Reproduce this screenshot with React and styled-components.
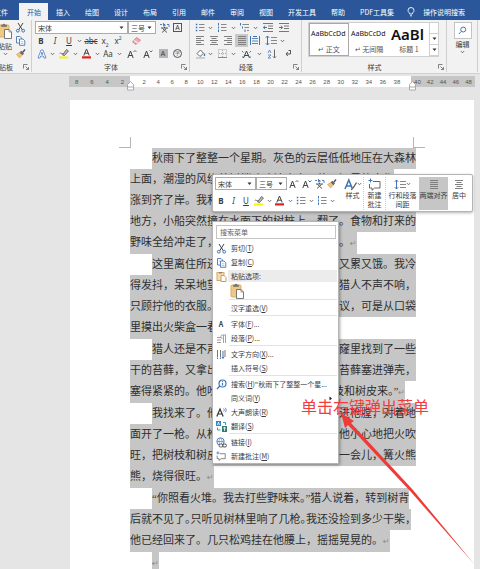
import React from 'react'
import styled, { createGlobalStyle, ThemeProvider } from 'styled-components'

const theme = {
  blue: '#2b579a',
  ribbon: '#f3f2f2',
  line: '#d0d0d0',
  ink: '#3b3b3b',
  accent: '#3f74b5',
  desk: '#e5e5e5',
  selection: '#c6c6c6',
  red: '#f23c3c'
}

const GlobalStyle = createGlobalStyle`
  * {
    box-sizing: border-box;
  }
  body {
    margin: 0;
    font-family: "Noto Sans CJK SC", sans-serif;
    font-size: 7px;
    color: #3b3b3b;
  }
  button, input, select {
    margin: 0;
    padding: 0;
    border: 0;
    background: none;
    font: inherit;
    color: inherit;
  }
`

/* ---------- icons ---------- */

const Svg = styled.svg`
  display: block;
  flex: none;
  fill: none;
  stroke: ${({ theme }) => theme.ink};
  stroke-width: 1;
`

const Icon = ({ w = 11, h = 11, children }) => (
  <Svg width={w} height={h} viewBox={`0 0 ${w} ${h}`} aria-hidden="true">
    {children}
  </Svg>
)

const Chevron = () => (
  <Icon w={5} h={4}>
    <path d="M.8 1l1.700 1.800L4.200 1" stroke="#666" strokeWidth=".9" />
  </Icon>
)

const Triangle = () => (
  <Icon w={5} h={4}>
    <path d="M.5.5h4L2.500 3z" fill="#333" stroke="none" />
  </Icon>
)

const Scissors = () => (
  <Icon>
    <path d="M3 1l4.500 7M8 1L3.500 8" stroke="#444" />
    <circle cx="2.800" cy="8.700" r="1.400" stroke="#3f74b5" />
    <circle cx="8.200" cy="8.700" r="1.400" stroke="#3f74b5" />
  </Icon>
)

const Copy = () => (
  <Icon>
    <path d="M1.500 1.500h3.500l1.500 1.500v5h-5z" fill="#fff" stroke="#5b83b8" />
    <path d="M4.500 4h3.500l1.800 1.800v4.500H4.500z" fill="#fff" stroke="#5b83b8" />
    <path d="M5.800 6.800h2.600M5.800 8.500h2.600M2.700 4h1.500" stroke="#8fabd0" strokeWidth=".7" />
  </Icon>
)

const Painter = () => (
  <Icon>
    <path d="M1.500 6.500l3-2 2.500 2.800-2.400 2.600z" fill="#f0c27a" stroke="#d9a24c" strokeWidth=".7" />
    <path d="M4.600 4.200l2.800 3L9 5.600 6.400 2.800z" fill="#666" stroke="none" />
    <path d="M7.800 4.200L10 1.600" stroke="#555" strokeWidth="1.500" />
  </Icon>
)

const Paste = () => (
  <Icon w={15} h={17}>
    <rect x="1" y="2" width="10" height="12" rx="1" fill="#efc983" stroke="#dfae5b" />
    <path d="M3.500 3.500v-1.500h1.500c0-1.300 2-1.300 2 0h1.500v1.500z" fill="#777" stroke="#666" strokeWidth=".5" />
    <path d="M6.500 6.500h4.500l2.500 2.500v6.500h-7z" fill="#fff" stroke="#777" />
    <path d="M11 6.500v2.500h2.500" stroke="#777" strokeWidth=".7" />
  </Icon>
)

const PasteSmall = () => (
  <Icon>
    <rect x="1" y="1.500" width="7" height="8" fill="#f6dcae" stroke="#d8a867" />
    <path d="M3 1h3v1.500H3z" fill="#888" stroke="none" />
    <path d="M5 4.500h3l2 2v4H5z" fill="#fff" stroke="#c79a68" />
  </Icon>
)

const Lines = ({ type = 'justify' }) => {
  const d = {
    left: 'M1 .5h8M1 2.500h5M1 4.500h8M1 6.500h5M1 8.500h8',
    center: 'M1 .5h8M2.500 2.500h5M1 4.500h8M2.500 6.500h5M1 8.500h8',
    right: 'M1 .5h8M4 2.500h5M1 4.500h8M4 6.500h5M1 8.500h8',
    justify: 'M1 .5h8M1 2.500h8M1 4.500h8M1 6.500h8M1 8.500h8'
  }[type]
  return (
    <Icon w={10} h={9}>
      <path d={d} stroke="#808080" />
    </Icon>
  )
}

const Bullets = () => (
  <Icon w={10} h={9}>
    <path d="M.8 1.500h1.500M.8 4.500h1.500M.8 7.500h1.500" stroke="#3f74b5" strokeWidth="1.400" />
    <path d="M4 1.500h5.500M4 4.500h5.500M4 7.500h5.500" stroke="#888" />
  </Icon>
)

const Numbering = () => (
  <Icon w={10} h={9}>
    <path d="M1.500 0v2.500M1.500 3.500v2M1.500 6.500V9" stroke="#3f74b5" />
    <path d="M4 1.500h5.500M4 4.500h5.500M4 7.500h5.500" stroke="#888" />
  </Icon>
)

const Multilevel = () => (
  <Icon w={11} h={9}>
    <path d="M1.500 0v2.500M3.500 3.500v2M6 6.500V9" stroke="#3f74b5" />
    <path d="M3.500 1.500H10M5.500 4.500H10M8 7.500h2" stroke="#888" />
  </Icon>
)

const Indent = ({ out }) => (
  <Icon w={10} h={9}>
    <path d="M0 .5h10M5 3h5M5 5.500h5M0 8.500h10" stroke="#777" />
    <path d={out ? 'M4 4.500H.5M2 2.700L.5 4.500 2 6.200' : 'M0 4.500h3.500M2 2.700l1.500 1.800L2 6.200'} stroke="#3f74b5" />
  </Icon>
)

const Distribute = () => (
  <Icon w={10} h={9}>
    <path d="M.5 0v9M9.500 0v9" stroke="#3f74b5" />
    <path d="M2 2.500h6M2 5h6M2 7.500h6" stroke="#5f86bb" />
    <path d="M3 .5h4" stroke="#3f74b5" />
  </Icon>
)

const Spacing = () => (
  <Icon w={12} h={11}>
    <path d="M2.500 1v9M.8 2.800L2.500 1l1.700 1.800M.8 8.200L2.500 10l1.700-1.800" stroke="#3f74b5" />
    <path d="M6 2.500h6M6 5.500h6M6 8.500h6" stroke="#888" />
  </Icon>
)

const Bucket = () => (
  <Icon w={11} h={10}>
    <path d="M2 4.500L5.500 1l3 3.300L5 7.500z" fill="#fff" stroke="#666" />
    <path d="M9.500 4.500v2.500" stroke="#3f74b5" strokeWidth="1.300" />
    <path d="M1 9h9" stroke="#aaa" />
  </Icon>
)

const Borders = () => (
  <Icon w={9} h={9}>
    <path d="M.5.5h8v8h-8zM4.500 1v7M1 4.500h7" stroke="#aaa" strokeDasharray="1 1" />
    <path d="M0 8.500h9" stroke="#888" />
  </Icon>
)

const AsianLayout = () => (
  <Icon w={11} h={10}>
    <path d="M1 2l1.500 1.500M10 2L8.500 3.500M1 8h1.500M10 8H8.500" stroke="#3f74b5" />
    <path d="M2.500 9l3-7 3 7M3.800 6.500h3.500" stroke="#444" />
  </Icon>
)

const Sort = () => (
  <Icon w={10} h={10}>
    <path d="M1 4l1.500-3L4 4M1 6h3L1 9h3" stroke="#4a78b4" strokeWidth=".8" />
    <path d="M7.500.5v8.500M6 7.500L7.500 9 9 7.500" stroke="#666" />
  </Icon>
)

const Mark = () => (
  <Icon w={8} h={9}>
    <path d="M6.500 1v4H2M3.800 3L2 5l1.800 2M4.500 1.500H7" stroke="#555" />
  </Icon>
)

const Highlighter = () => (
  <Icon w={12} h={11}>
    <path d="M1 8.500h9v2H1z" fill="#f7f10d" stroke="none" />
    <path d="M2 5.500c1-2 2 2 3-.5M4.500 7l4-5.500L10.500 3 6.500 7.500z" fill="#bbb" stroke="#555" strokeWidth=".8" />
  </Icon>
)

const FontColor = () => (
  <Icon w={11} h={11}>
    <path d="M2.800 7.500L5.500 1l2.700 6.500M3.700 5.200h3.600" stroke="#444" />
    <path d="M1 8.300h9v2.200H1z" fill="#e2211c" stroke="none" />
  </Icon>
)

const OutlineA = () => (
  <Icon w={10} h={10}>
    <path d="M1 9L4 1h2l3 8H7L6.300 7H3.700L3 9zM4.200 5.300h1.600L5 3z" fill="#fff" stroke="#5b8ac6" strokeWidth=".9" />
  </Icon>
)

const Eraser = () => (
  <Icon w={11} h={10}>
    <path d="M1.500 6l4-4.500L9.500 4 5 8.500z" fill="#f3a9b4" stroke="#c9788a" strokeWidth=".8" />
    <path d="M3 4.500l4 2.500" stroke="#fff" />
  </Icon>
)

const Phonetic = () => (
  <Icon w={11} h={11}>
    <path d="M1 2.500h2M4.500 1v3h1.500V2.500H4.500M8 2.500h2v2.500" stroke="#3f74b5" strokeWidth=".9" />
    <path d="M2 6h7M5.500 5v1M3.500 6.500L8 10.500M7.500 6.500L3 10.500" stroke="#444" strokeWidth=".9" />
  </Icon>
)

const GrowFont = ({ shrink }) => (
  <Icon w={10} h={10}>
    <path d="M.8 9L3.500 2l2.700 7M1.800 6.500h3.500" stroke="#444" />
    <path d={shrink ? 'M6.500 1.500L8 3l1.500-1.500' : 'M6.500 3L8 1.500 9.500 3'} stroke="#3f74b5" />
  </Icon>
)

const Launcher = () => (
  <Icon w={6} h={6}>
    <path d="M.5 4.500v-4h4M2.500 2.500l3 3M5.500 3v2.500H3" stroke="#666" strokeWidth=".8" />
  </Icon>
)

const Search = () => (
  <Icon w={9} h={9}>
    <circle cx="5.200" cy="3.500" r="2.500" stroke="#3f74b5" />
    <path d="M3.300 5.400L.8 8" stroke="#3f74b5" />
  </Icon>
)

const Bulb = () => (
  <Icon w={8} h={10}>
    <path d="M2.700 7C2.700 5.500 1 5 1 3.500a3 3 0 016 0C7 5 5.300 5.500 5.300 7zM3 8.800h2" stroke="#fff" strokeWidth=".9" />
  </Icon>
)

const StyleA = () => (
  <Icon w={13} h={13}>
    <path d="M1 11L4.800 2 8.500 11M2.300 8h5" stroke="#3f74b5" strokeWidth="1.500" />
    <path d="M7 11.500c2 0 2-2 3-3l2.500-4" stroke="#666" strokeWidth="1.300" />
  </Icon>
)

const Comment = ({ w = 13 }) => (
  <Svg width={w} height={w} viewBox="0 0 13 13" aria-hidden="true">
    <path d="M5 3.500h7v6.500H6.500L4 12.300V10H1.500V6" stroke="#666" />
    <path d="M2.500.5v4M.5 2.500h4" stroke="#3f74b5" />
  </Svg>
)

const ParagraphIcon = () => (
  <Icon>
    <path d="M1 4.500h4M1 7h4M1 9.500h4" stroke="#999" />
    <path d="M9.500 10V2M7.500 10V2M10 2H6.500a1.700 1.700 0 000 3.500" stroke="#999" strokeWidth=".9" />
  </Icon>
)

const Direction = () => (
  <Icon>
    <path d="M1.500 1v7M4.500 1v7M9 1v7" stroke="#777" />
    <path d="M1.500 10v-1.500M4.500 10V8.500M7 2v7M6 8l1 1.500L8 8" stroke="#3f74b5" />
  </Icon>
)

const SmartSearch = () => (
  <Icon>
    <circle cx="6.500" cy="4.500" r="3.500" stroke="#3f74b5" strokeWidth="1.200" />
    <path d="M3.800 7L1 10M6.500 4v2.500M6.500 2.200v1" stroke="#3f74b5" strokeWidth="1.200" />
  </Icon>
)

const ReadAloud = () => (
  <Icon>
    <path d="M.8 9.500L4 2l3.200 7.500M2 7h4" stroke="#333" strokeWidth="1.200" />
    <path d="M7.500 1.500c1 1 1 2 0 3M9.200.8c1.300 1.500 1.300 3 0 4.500" stroke="#3f74b5" strokeWidth=".8" />
  </Icon>
)

const Translate = () => (
  <Icon>
    <path d="M0 0h5v5H0z" fill="#2f86c9" stroke="none" />
    <path d="M6 5h5v6H6z" fill="#2f7d6b" stroke="none" />
    <path d="M1.500 4l1-3 1 3M7 7h3M8.500 6v4" stroke="#fff" strokeWidth=".8" />
    <path d="M7 1.500h2.500V4M1.500 6.500V9H4.500" stroke="#2f9ad0" />
  </Icon>
)

const LinkIcon = () => (
  <Icon>
    <circle cx="4.500" cy="4.500" r="3.700" stroke="#5b83b8" />
    <path d="M1 4.500h7M4.500 1c-2 2-2 5 0 7M4.500 1c2 2 2 5 0 7" stroke="#5b83b8" strokeWidth=".7" />
    <rect x="3" y="7" width="4" height="3" rx="1.500" fill="#fff" stroke="#555" />
    <rect x="6.500" y="7" width="4" height="3" rx="1.500" stroke="#555" />
  </Icon>
)

/* ---------- ribbon ---------- */

const Window = styled.div`
  position: relative;
  display: flex;
  flex-direction: column;
  height: 100vh;
  overflow: hidden;
  background: ${({ theme }) => theme.desk};
`

const Tabs = styled.nav`
  display: flex;
  align-items: flex-end;
  flex: none;
  height: 20px;
  padding-right: 8px;
  background: ${({ theme }) => theme.blue};
  color: #fff;
`

const Tab = styled.button`
  flex: none;
  height: 17px;
  padding: 0 7px 0 8px;
  line-height: 16px;
  white-space: nowrap;
  background: ${({ $active }) => ($active ? '#f3f2f2' : 'transparent')};
  color: ${({ $active, theme }) => ($active ? theme.blue : '#fff')};

  &:first-child {
    margin-left: -14px;
    padding-right: 11px;
  }
`

const TellMe = styled.button`
  display: flex;
  align-items: center;
  gap: 8px;
  height: 17px;
  margin-left: 6px;
  white-space: nowrap;
  color: #fff;
`

const Ribbon = styled.div`
  display: flex;
  height: 54px;
  flex: none;
  background: ${({ theme }) => theme.ribbon};
  border-bottom: 1px solid ${({ theme }) => theme.line};
`

const Group = styled.section`
  display: flex;
  flex-direction: column;
  flex: none;
  width: ${({ $width }) => $width}px;
  padding: 1px 2px 0 3px;
  margin-bottom: 1px;
  overflow: hidden;
  border-right: 1px solid ${({ theme }) => theme.line};
`

const GroupBody = styled.div`
  display: flex;
  flex-direction: ${({ $row }) => ($row ? 'row' : 'column')};
  flex: none;
  height: 40px;
`

const GroupFooter = styled.div`
  display: grid;
  grid-template-columns: 6px 1fr 6px;
  align-items: center;
  height: 12px;
  line-height: 12px;
  text-align: center;
  white-space: nowrap;
`

const Row = styled.div`
  display: flex;
  align-items: center;
  height: 13px;
`

const Tool = styled.button`
  display: flex;
  flex: none;
  align-items: center;
  justify-content: center;
  width: ${({ $w }) => $w}px;
  height: 13px;
  font: 8px/13px "Noto Sans", sans-serif;
  font-weight: ${({ $bold }) => ($bold ? 700 : 400)};
  font-style: ${({ $italic }) => ($italic ? 'italic' : 'normal')};
  text-decoration: ${({ $deco }) => $deco || 'none'};
  background: ${({ $on }) => ($on ? '#c9c9c9' : 'none')};

  sub, sup {
    font-size: 5px;
    line-height: 5px;
  }
`

const Boxed = styled.span`
  width: 9px;
  height: 9px;
  border: 1px solid ${({ $plain }) => ($plain ? '#b5b5b5' : '#555')};
  border-radius: ${({ $round }) => ($round ? 5 : 0)}px;
  background: ${({ $plain }) => ($plain ? '#b5b5b5' : 'none')};
  font-size: ${({ $round }) => ($round ? 5 : 7)}px;
  line-height: 7px;
  text-align: center;
`

const SelectBox = styled.label`
  display: grid;
  grid-template-columns: 1fr 8px;
  align-items: center;
  flex: none;
  width: ${({ $w }) => $w}px;
  height: 13px;
  border: 1px solid #ababab;
  background: #fff;

  select {
    grid-area: 1 / 1 / 2 / 3;
    width: 100%;
    height: 11px;
    padding-left: 2px;
    appearance: none;
    outline: 0;
  }
  svg {
    grid-area: 1 / 2;
  }
`

const Select = ({ w, label, value }) => (
  <SelectBox $w={w}>
    <select aria-label={label} defaultValue={value}>
      <option>{value}</option>
    </select>
    <Triangle />
  </SelectBox>
)

const PasteColumn = styled.button`
  display: flex;
  flex-direction: column;
  align-items: center;
  width: 20px;
  margin-left: -8px;
  padding-top: 2px;
  line-height: 12px;
  white-space: nowrap;
`

const ToolColumn = styled.div`
  display: flex;
  flex-direction: column;
  align-items: center;
`

const ClipFooter = styled.div`
  display: flex;
  align-items: center;
  justify-content: space-between;
  height: 12px;
  margin-left: -11px;
  white-space: nowrap;
`

const Gallery = styled.div`
  display: flex;
  width: 131px;
  height: 35px;
  margin: 1px 0 0 3px;
  background: #fff;
  border: 1px solid ${({ theme }) => theme.line};
`

const StyleCard = styled.button`
  display: flex;
  flex-direction: column;
  align-items: center;
  flex: 1;
  min-width: 0;
  overflow: hidden;
  white-space: nowrap;
  border: 1px solid ${({ $active }) => ($active ? '#a8a8a8' : 'transparent')};
`

const Sample = styled.span`
  width: 100%;
  height: 20px;
  padding-left: 1px;
  overflow: hidden;
  text-align: left;
  font-family: "Noto Sans", sans-serif;
  font-size: ${({ $big }) => ($big ? 15 : 7)}px;
  font-weight: ${({ $big }) => ($big ? 600 : 400)};
  color: #111;
  line-height: 20px;
`

const SampleName = styled.span`
  line-height: 10px;
  color: #555;
`

const GalleryScroll = styled.div`
  display: flex;
  flex-direction: column;
  width: 9px;
  flex: none;

  button {
    display: flex;
    align-items: center;
    justify-content: center;
    flex: 1;
    border-left: 1px solid ${({ theme }) => theme.line};
    border-bottom: 1px solid ${({ theme }) => theme.line};
  }
`

const EditButton = styled.button`
  display: flex;
  flex-direction: column;
  align-items: center;
  margin: 1px auto 0;
  line-height: 11px;
`

const EditBox = styled.span`
  display: flex;
  align-items: center;
  justify-content: center;
  width: 18px;
  height: 17px;
  border: 1px solid #c4c4c4;
  background: #fff;
`

const Footer = ({ children }) => (
  <GroupFooter>
    <span />
    <span>{children}</span>
    <Launcher />
  </GroupFooter>
)

const Drop = ({ w = 4 }) => (
  <Tool $w={w} aria-label="更多">
    <Chevron />
  </Tool>
)

const ClipboardGroup = () => (
  <Group $width={32}>
    <GroupBody $row>
      <PasteColumn>
        <Paste />
        粘贴
        <Chevron />
      </PasteColumn>
      <ToolColumn>
        <Tool $w={11} aria-label="剪切"><Scissors /></Tool>
        <Tool $w={11} aria-label="复制"><Copy /></Tool>
        <Tool $w={11} aria-label="格式刷"><Painter /></Tool>
      </ToolColumn>
    </GroupBody>
    <ClipFooter>
      <span>剪贴板</span>
      <Launcher />
    </ClipFooter>
  </Group>
)

const FontGroup = () => (
  <Group $width={158}>
    <GroupBody>
      <Row>
        <Select w={93} label="字体" value="宋体" />
        <Select w={28} label="字号" value="三号" />
        <Tool $w={16} aria-label="拼音指南"><Phonetic /></Tool>
        <Tool $w={11} aria-label="字符边框"><Boxed>A</Boxed></Tool>
      </Row>
      <Row>
        <Tool $w={12} $bold>B</Tool>
        <Tool $w={16} $italic>I</Tool>
        <Tool $w={12} $deco="underline">U</Tool>
        <Drop w={8} />
        <Tool $w={16} $deco="line-through">abc</Tool>
        <Tool $w={12}><span>x<sub>2</sub></span></Tool>
        <Tool $w={14}><span>x<sup>2</sup></span></Tool>
        <Tool $w={22} aria-label="清除格式"><Eraser /></Tool>
      </Row>
      <Row>
        <Tool $w={14} aria-label="文本效果"><OutlineA /></Tool>
        <Drop w={6} />
        <Tool $w={18} aria-label="突出显示"><Highlighter /></Tool>
        <Drop />
        <Tool $w={18} aria-label="字体颜色"><FontColor /></Tool>
        <Drop />
        <Tool $w={18}>Aa</Tool>
        <Drop />
        <Tool $w={22} aria-label="增大字号"><GrowFont /></Tool>
        <Tool $w={10} aria-label="减小字号"><GrowFont shrink /></Tool>
        <Tool $w={20} aria-label="字符底纹"><Boxed $plain>A</Boxed></Tool>
        <Tool $w={9} aria-label="带圈字符"><Boxed $round>字</Boxed></Tool>
      </Row>
    </GroupBody>
    <Footer>字体</Footer>
  </Group>
)

const ParagraphGroup = () => (
  <Group $width={112}>
    <GroupBody>
      <Row>
        <Tool $w={14} aria-label="项目符号"><Bullets /></Tool>
        <Drop w={6} />
        <Tool $w={18} aria-label="编号"><Numbering /></Tool>
        <Drop />
        <Tool $w={18} aria-label="多级列表"><Multilevel /></Tool>
        <Drop />
        <Tool $w={22} aria-label="减少缩进量"><Indent out /></Tool>
        <Tool $w={10} aria-label="增加缩进量"><Indent /></Tool>
      </Row>
      <Row>
        <Tool $w={14} aria-label="左对齐"><Lines type="left" /></Tool>
        <Tool $w={14} aria-label="居中"><Lines type="center" /></Tool>
        <Tool $w={14} aria-label="右对齐"><Lines type="right" /></Tool>
        <Tool $w={13} $on aria-label="两端对齐"><Lines /></Tool>
        <Tool $w={14} aria-label="分散对齐"><Distribute /></Tool>
        <Tool $w={18} aria-label="行距"><Spacing /></Tool>
        <Drop />
      </Row>
      <Row>
        <Tool $w={14} aria-label="底纹"><Bucket /></Tool>
        <Drop w={6} />
        <Tool $w={18} aria-label="边框"><Borders /></Tool>
        <Drop />
        <Tool $w={22} aria-label="中文版式"><AsianLayout /></Tool>
        <Drop />
        <Tool $w={22} aria-label="排序"><Sort /></Tool>
        <Tool $w={9} aria-label="显示标记"><Mark /></Tool>
      </Row>
    </GroupBody>
    <Footer>段落</Footer>
  </Group>
)

const StylesGroup = () => (
  <Group $width={145}>
    <GroupBody>
      <Gallery>
        <StyleCard $active>
          <Sample>AaBbCcDd</Sample>
          <SampleName>↵ 正文</SampleName>
        </StyleCard>
        <StyleCard>
          <Sample>AaBbCcDd</Sample>
          <SampleName>↵ 无间隔</SampleName>
        </StyleCard>
        <StyleCard>
          <Sample $big>AaBl</Sample>
          <SampleName>标题 1</SampleName>
        </StyleCard>
        <GalleryScroll>
          <button aria-label="上一行" />
          <button aria-label="下一行"><Triangle /></button>
          <button aria-label="其他"><Triangle /></button>
        </GalleryScroll>
      </Gallery>
    </GroupBody>
    <Footer>样式</Footer>
  </Group>
)

const EditGroup = () => (
  <Group $width={31}>
    <EditButton>
      <EditBox><Search /></EditBox>
      编辑
      <Chevron />
    </EditButton>
  </Group>
)

const tabs = ['文件', '开始', '插入', '绘图', '设计', '布局', '引用', '邮件', '审阅', '视图', '开发工具', '帮助', 'PDF工具集']

/* ---------- ruler and page ---------- */

const Ruler = styled.div`
  display: flex;
  flex: none;
  height: 11px;
  margin: 2px 5px 13px 69px;
  font: 6px/12px "Liberation Sans", sans-serif;
  color: #555;
`

const RulerPart = styled.div`
  display: flex;
  flex: ${({ $flex }) => $flex} 1 0;
  min-width: 0;
  background: ${({ $main }) => ($main ? '#fff' : '#c6c6c6')};

  span {
    flex: 2;
    width: 0;
    text-align: center;
  }
  &::before, &::after {
    content: ${({ $main }) => ($main ? '""' : 'none')};
    flex: 1;
  }
`

const IndentMark = styled.span`
  position: absolute;
  left: ${({ $x }) => $x}px;
  top: 81px;
`

const Pointer = ({ x }) => (
  <IndentMark $x={x}>
    <Icon w={7} h={10}>
      <path d="M.5 6V3.500l3-3 3 3V9h-6V6h6" fill="#fff" stroke="#999" strokeWidth=".8" />
    </Icon>
  </IndentMark>
)

const Page = styled.main`
  flex: 1 0 auto;
  margin: 0 6px 0 70px;
  padding: 37px 49px 0;
  background: #fff;
`

const Corners = styled.div`
  display: flex;
  justify-content: space-between;
  height: 11px;

  span {
    width: 12px;
    border: 0 solid #b5b5b5;
    border-bottom-width: 1px;
  }
  span:first-child {
    border-right-width: 1px;
  }
  span:last-child {
    border-left-width: 1px;
  }
`

const Paragraph = styled.p`
  display: flex;
  flex-direction: column;
  align-items: flex-start;
  margin: 0 11px;
  font-family: "Liberation Serif", "Noto Sans CJK SC", serif;
  font-size: 11px;
  line-height: 21px;
  color: #2e2e2e;
`

const Line = styled.span`
  height: 21px;
  white-space: nowrap;
  background: ${({ theme }) => theme.selection};
  font-feature-settings: ${({ $tight }) => ($tight ? '"halt"' : 'normal')};

  &:first-child {
    margin-left: 22px;
  }
  &:last-child {
    height: 22px;
  }
`

const Return = styled.i`
  font: 8px/20px "DejaVu Sans", sans-serif;
  color: #888;
`

const paragraphs = [
  [
    '秋雨下了整整一个星期。灰色的云层低低地压在大森林',
    '上面，潮湿的风绕着树梢呜呜地吹个不停。河里的水都',
    '涨到齐了岸。我和猎人划着小船回家，在河道拐弯的那',
    '地方，小船突然撞在水面下的树桩上，翻了。食物和打来的',
    '野味全给冲走了，我们只好游到岸上去避雨。'
  ],
  [
    '这里离住所还有很远的路，我们浑身湿又累又饿。我冷',
    '得发抖，呆呆地望着灰蒙蒙的天空和河水。猎人不声不响，',
    '只顾拧他的衣服。我向他提出了生堆火的建议，可是从口袋',
    '里摸出火柴盒一看，火柴全湿透了。'
  ],
  [
    '猎人还是不声不响。他在一棵枯树的窟窿里找到了一些',
    '干的苔藓，又拿出一颗子弹倒出火药来，把苔藓塞进弹壳，',
    '塞得紧紧的。他吩咐我：“快去找些干枯树枝和树皮来。”'
  ],
  [
    '我找来了。他把塞好苔藓的弹壳小心装进枪膛，对着地',
    '面开了一枪。从枪管里喷出来一小团火苗。他小心地把火吹',
    '旺，把树枝和树皮轻轻地架在火苗上。没过一会儿，篝火熊',
    '熊，烧得很旺。'
  ],
  [
    '“你照看火堆。我去打些野味来。”猎人说着，转到树背',
    '后就不见了。只听见树林里响了几枪。我还没捡到多少干柴，',
    '他已经回来了。几只松鸡挂在他腰上，摇摇晃晃的。'
  ],
  ['']
]

/* ---------- floating toolbar ---------- */

const MiniToolbar = styled.div`
  position: absolute;
  left: 212px;
  top: 174px;
  display: flex;
  height: 38px;
  padding: 2px;
  background: #fff;
  border: 1px solid #b4b4b4;
  border-radius: 2px;
  box-shadow: 0 1px 3px rgba(0, 0, 0, 0.3);
`

const MiniTools = styled.div`
  display: flex;
  flex-direction: column;
  gap: 4px;
  width: 127px;
`

const MiniButton = styled.button`
  display: flex;
  flex-direction: column;
  align-items: center;
  flex: none;
  width: ${({ $w }) => $w}px;
  height: 33px;
  line-height: 9px;
  white-space: nowrap;
  background: ${({ $on }) => ($on ? '#c6c6c6' : 'none')};
  border-right: ${({ $rule }) => ($rule ? '1px dotted #ccc' : '0')};
`

const MiniIcon = styled.span`
  display: flex;
  align-items: center;
  height: 14px;
`

/* ---------- context menu ---------- */

const Menu = styled.div`
  position: absolute;
  left: 212px;
  top: 221px;
  width: 127px;
  padding: 3px 1px 0;
  background: #fff;
  border: 1px solid #b4b4b4;
  box-shadow: 1px 1px 3px rgba(0, 0, 0, 0.35);
`

const MenuSearch = styled.input`
  display: block;
  width: 120px;
  height: 14px;
  margin: 0 2px 2px;
  padding-left: 3px;
  border: 1px solid #c4c4c4;

  &::placeholder {
    color: #666;
    opacity: 1;
  }
`

const MenuItem = styled.button`
  display: grid;
  grid-template-columns: 14px 1fr 8px;
  align-items: center;
  width: 100%;
  height: 14px;
  text-align: left;
  white-space: nowrap;
`

const MenuIcon = styled.span`
  display: flex;
  justify-content: center;
  font-weight: 700;
`

const MenuText = styled.span`
  padding-left: 3px;
  line-height: 12px;
  background: ${({ $heading }) => ($heading ? '#ececec' : 'none')};
  grid-column: ${({ $heading }) => ($heading ? '2 / 4' : 'auto')};
`

const PasteOption = styled.button`
  display: block;
  height: 16px;
  margin-left: 16px;
`

const Divider = styled.div`
  height: 2px;
  margin-left: 15px;
  border-top: 1px solid #e2e2e2;
`

const Item = ({ icon, keyName, after, arrow, children }) => (
  <MenuItem>
    <MenuIcon>{icon}</MenuIcon>
    <MenuText>
      {children}(<u>{keyName}</u>){after}
    </MenuText>
    {arrow && (
      <Icon w={4} h={5}>
        <path d="M.5.5v4L3 2.500z" fill="#222" stroke="none" />
      </Icon>
    )}
  </MenuItem>
)

/* ---------- annotation ---------- */

const Note = styled.strong`
  position: absolute;
  left: 301px;
  top: 396px;
  font-size: 16px;
  font-weight: 400;
  line-height: 20px;
  white-space: nowrap;
  color: ${({ theme }) => theme.red};
`

const Arrow = styled.svg`
  position: absolute;
  left: 340px;
  top: 412px;
`

const App = () => (
  <ThemeProvider theme={theme}>
    <GlobalStyle />
    <Window>
      <Tabs>
        {tabs.map(name => (
          <Tab key={name} $active={name === '开始'}>{name}</Tab>
        ))}
        <TellMe><Bulb />操作说明搜索</TellMe>
      </Tabs>
      <Ribbon>
        <ClipboardGroup />
        <FontGroup />
        <ParagraphGroup />
        <StylesGroup />
        <EditGroup />
      </Ribbon>

      <Ruler>
        <RulerPart $flex={61}>
          {[8, 6, 4, 2].map(n => <span key={n}>{n}</span>)}
        </RulerPart>
        <RulerPart $flex={281} $main>
          {Array.from({ length: 19 }, (_, i) => <span key={i}>{i * 2 + 2}</span>)}
        </RulerPart>
        <RulerPart $flex={64}>
          {[40, 42, 44, 46, 48].map(n => <span key={n}>{n}</span>)}
        </RulerPart>
      </Ruler>
      <Pointer x={127} />
      <Pointer x={409} />

      <Page>
        <Corners><span /><span /></Corners>
        {paragraphs.map((lines, p) => (
          <Paragraph key={p}>
            {lines.map((text, i) => (
              <Line key={i} $tight={text.length > 26 && text.endsWith('，')}>
                {text}
                {i === lines.length - 1 && <Return>↵</Return>}
              </Line>
            ))}
          </Paragraph>
        ))}
      </Page>

      <MiniToolbar>
        <MiniTools>
          <Row>
            <Select w={41} label="字体" value="宋体" />
            <Select w={31} label="字号" value="三号" />
            <Tool $w={13} aria-label="增大字号"><GrowFont /></Tool>
            <Tool $w={13} aria-label="减小字号"><GrowFont shrink /></Tool>
            <Tool $w={12} aria-label="拼音指南"><Phonetic /></Tool>
            <Tool $w={13} aria-label="格式刷"><Painter /></Tool>
          </Row>
          <Row>
            <Tool $w={12} $bold>B</Tool>
            <Tool $w={13} $italic>I</Tool>
            <Tool $w={12} $deco="underline">U</Tool>
            <Tool $w={14} aria-label="突出显示"><Highlighter /></Tool>
            <Drop w={6} />
            <Tool $w={15} aria-label="字体颜色"><FontColor /></Tool>
            <Drop w={6} />
            <Tool $w={15} aria-label="项目符号"><Bullets /></Tool>
            <Drop w={6} />
            <Tool $w={15} aria-label="编号"><Numbering /></Tool>
            <Drop w={6} />
          </Row>
        </MiniTools>
        <MiniButton $w={22} $rule>
          <MiniIcon><StyleA /><Chevron /></MiniIcon>
          样式
        </MiniButton>
        <MiniButton $w={22} $rule>
          <MiniIcon><Comment /></MiniIcon>
          新建<br />批注
        </MiniButton>
        <MiniButton $w={33}>
          <MiniIcon><Spacing /><Chevron /></MiniIcon>
          行和段落<br />间距
        </MiniButton>
        <MiniButton $w={29} $on>
          <MiniIcon><Lines /></MiniIcon>
          两端对齐
        </MiniButton>
        <MiniButton $w={22}>
          <MiniIcon><Lines type="center" /></MiniIcon>
          居中
        </MiniButton>
      </MiniToolbar>

      <Menu>
        <MenuSearch aria-label="搜索菜单" placeholder="搜索菜单" />
        <Item icon={<Scissors />} keyName="T">剪切</Item>
        <Item icon={<Copy />} keyName="C">复制</Item>
        <MenuItem as="div">
          <MenuIcon><PasteSmall /></MenuIcon>
          <MenuText $heading>粘贴选项:</MenuText>
        </MenuItem>
        <PasteOption aria-label="保留源格式"><Paste /></PasteOption>
        <Divider />
        <Item keyName="V">汉字重选</Item>
        <Divider />
        <Item icon="A" keyName="F" after="...">字体</Item>
        <Item icon={<ParagraphIcon />} keyName="P" after="...">段落</Item>
        <Divider />
        <Item icon={<Direction />} keyName="X" after="...">文字方向</Item>
        <Item keyName="S">插入符号</Item>
        <Divider />
        <Item icon={<SmartSearch />} keyName="H" after={'"秋雨下了整整一个星...'}>搜索</Item>
        <Item keyName="Y" arrow>同义词</Item>
        <Item icon={<ReadAloud />} keyName="R">大声朗读</Item>
        <Item icon={<Translate />} keyName="S">翻译</Item>
        <Divider />
        <Item icon={<LinkIcon />} keyName="I">链接</Item>
        <Item icon={<Comment w={10} />} keyName="M">新建批注</Item>
      </Menu>

      <Note>单击右键弹出菜单</Note>
      <Arrow width="136" height="155" viewBox="0 0 136 155" aria-hidden="true">
        <path d="M1 1l13 8-3 2 62 67 62 75-64-73L8 13l-3 3z" fill="#ee3b38" />
      </Arrow>
    </Window>
  </ThemeProvider>
)

export default App
